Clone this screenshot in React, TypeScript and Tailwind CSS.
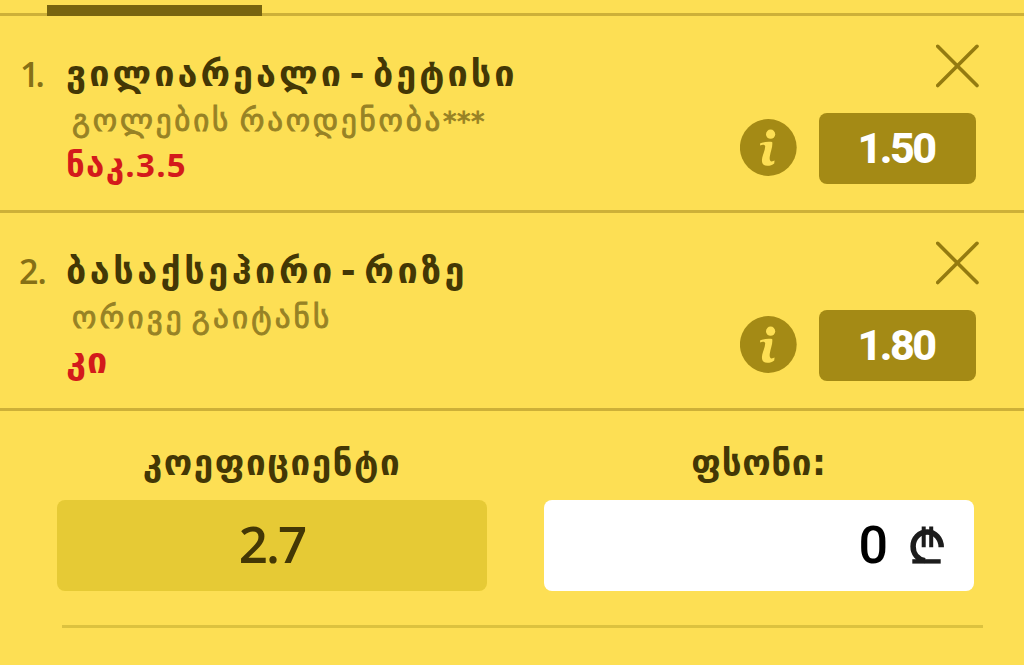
import clsx from "clsx";

interface Bet {
  id: number;
  match: string;
  market: string;
  note?: string;
  pick: string;
  odds: string;
  idClass: string;
  matchClass: string;
  marketClass: string;
  pickClass: string;
}

const bets: Bet[] = [
  {
    id: 1,
    match: "ვილიარეალი - ბეტისი",
    market: "გოლების რაოდენობა",
    note: "***",
    pick: "ნაკ.3.5",
    odds: "1.50",
    idClass: "pl-5 tracking-[-4px]",
    matchClass: "tracking-[3px] [word-spacing:-10px]",
    marketClass: "tracking-[2.8px] [word-spacing:-4px]",
    pickClass: "text-[33px] tracking-[1.3px]",
  },
  {
    id: 2,
    match: "ბასაქსეჰირი - რიზე",
    market: "ორივე გაიტანს",
    pick: "კი",
    odds: "1.80",
    idClass: "pl-[19px] tracking-[-1px]",
    matchClass: "tracking-[3.5px] [word-spacing:-11px]",
    marketClass: "tracking-[3.2px] [word-spacing:-6px]",
    pickClass: "text-[36px] tracking-[1px]",
  },
];

function CloseIcon() {
  return (
    <svg viewBox="0 0 44 44" className="size-11" fill="none">
      <path
        d="M1.7 2.3 L41 41.6 M41 2.3 L1.7 41.6"
        stroke="#947b10"
        strokeWidth="3.6"
        strokeLinecap="round"
      />
    </svg>
  );
}

function InfoIcon() {
  return (
    <svg viewBox="0 0 57 57" className="size-[57px]">
      <circle cx="28.3" cy="28.5" r="28.4" fill="#a48a15" />
      <circle cx="30.6" cy="15.2" r="4.6" fill="#fddf54" />
      <path
        d="M20 24.6 C24 22.8 28 22.3 32.2 22.9 C33 27 30.7 32 29.8 37.5 C29.3 40.6 30 42.4 31.6 42.4 C32.8 42.4 33.6 42 34.6 41.6 L34.2 44.4 C32.4 46 30 46.7 27.3 46.7 C23.4 46.7 21.6 44.4 22 40.4 C22.4 36.2 25 31.8 25.2 27.6 C25.3 25.6 22.8 25.4 20.2 26.4 Z"
        fill="#fddf54"
      />
    </svg>
  );
}

function LariIcon() {
  return (
    <svg viewBox="0 0 36 40" className="h-10 w-9" fill="none" stroke="#1c1c1c">
      <path
        d="M31.2 21.2 C31.2 12.5 25.2 6 17.2 6 C9.2 6 3.1 12.3 3.1 20.4 C3.1 27.5 7.5 33.2 15 34.6"
        strokeWidth="5.5"
      />
      <path d="M2.3 35.4 H30.7" strokeWidth="4.4" />
      <path d="M13.7 0.5 V21.2 M21.2 0.5 V21.2" strokeWidth="4" />
    </svg>
  );
}

function BetRow({ bet }: { bet: Bet }) {
  return (
    <div
      className={clsx(
        "flex justify-between border-b-[3px] border-[#cdb038] pr-12",
        bet.id === 1 ? "h-[197px]" : "h-[198px]",
      )}
    >
      <div className="flex whitespace-nowrap pt-[38px]">
        <span
          className={clsx(
            "w-[66px] font-['Open_Sans'] text-[34px] leading-10 font-semibold text-[#867016]",
            bet.idClass,
          )}
        >
          {bet.id}.
        </span>
        <div>
          <h2 className={clsx("text-[36px] leading-10 font-bold text-[#433705]", bet.matchClass)}>
            {bet.match}
          </h2>
          <p
            className={clsx(
              "mt-1.5 pl-1.5 text-[31px] leading-10 text-[#978225] [-webkit-text-stroke:0.9px_#978225]",
              bet.marketClass,
            )}
          >
            {bet.market}
            {bet.note && <span className="text-[27px] tracking-[0.5px]">{bet.note}</span>}
          </p>
          <p
            className={clsx(
              "mt-[3px] h-10 font-['Open_Sans','DejaVu_Sans',sans-serif] leading-10 font-bold text-[#d31a1b]",
              bet.pickClass,
            )}
          >
            {bet.pick}
          </p>
        </div>
      </div>

      <div className="flex flex-col items-end pt-7">
        <button className="-mr-[4px]">
          <CloseIcon />
        </button>
        <div className="mt-[25px] flex items-center gap-[22px]">
          <button className="-mt-[3px]">
            <InfoIcon />
          </button>
          <div className="flex h-[71px] w-[157px] items-center justify-center rounded-lg bg-[#a48a15] pr-[3px] font-['Roboto'] text-[43px] leading-none font-extrabold tracking-[-2.5px] text-white">
            {bet.odds}
          </div>
        </div>
      </div>
    </div>
  );
}

function Summary() {
  return (
    <div className="pt-8 pr-[50px] pl-[57px]">
      <div className="grid grid-cols-2 gap-[57px]">
        <div className="flex flex-col items-center">
          <span className="text-[35px] leading-10 font-bold tracking-[1.5px] whitespace-nowrap text-[#433705]">
            კოეფიციენტი
          </span>
          <div className="mt-[17px] flex h-[91px] w-full items-center justify-center rounded-lg bg-[#e6ca35] pb-1 font-['Open_Sans'] text-[51px] leading-none font-semibold tracking-[-2px] text-[#433705]">
            2.7
          </div>
        </div>
        <div className="flex flex-col items-center">
          <span className="text-[35px] leading-10 font-bold tracking-[0.6px] whitespace-nowrap text-[#433705]">
            ფსონი:
          </span>
          <div className="mt-[17px] flex h-[91px] w-full items-center justify-end gap-[22px] rounded-lg bg-white pr-[28px]">
            <span className="font-['Roboto'] text-[52px] leading-none font-medium text-black">0</span>
            <LariIcon />
          </div>
        </div>
      </div>
      <div className="mt-[34px] -mr-[9px] ml-[5px] h-[3px] bg-[#dcc23f]" />
    </div>
  );
}

function App() {
  return (
    <main className="h-[665px] w-[1024px] overflow-hidden bg-[#fddf54] font-['DejaVu_Sans',sans-serif]">
      <div className="flex h-4 items-end border-b-[3px] border-[#cdb038] pl-[47px]">
        <div className="-mb-[3px] h-[11px] w-[215px] bg-[#78640f]" />
      </div>
      {bets.map((bet) => (
        <BetRow key={bet.id} bet={bet} />
      ))}
      <Summary />
    </main>
  );
}

export default App;
